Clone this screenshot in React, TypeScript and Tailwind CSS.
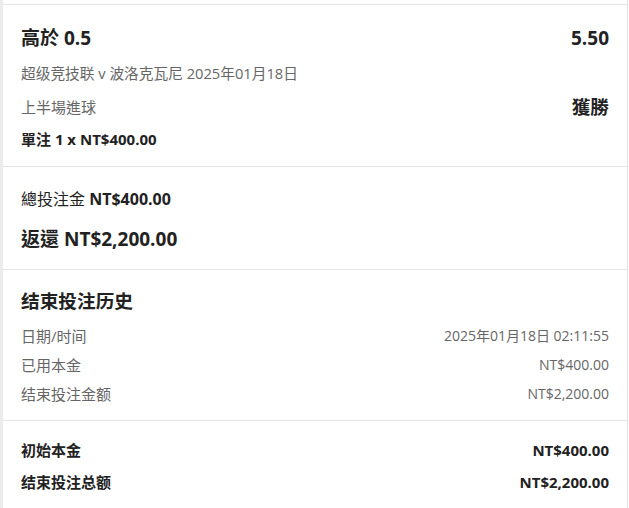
const font = {
  fontFamily: '"Open Sans", "Noto Sans CJK TC", "Noto Sans CJK SC", sans-serif',
};

const Row = ({ label, value }: { label: string; value: string }) => (
  <div className="flex h-5 items-center justify-between leading-5 text-[#666]">
    <span className="text-[15px]">{label}</span>
    <span className="text-[14px]">{value}</span>
  </div>
);

const App = () => {
  return (
    <div
      className="flex h-[508px] w-[629px] overflow-hidden bg-white text-[#222]"
      style={font}
    >
      <div className="w-[3px] shrink-0 bg-[#ececec]" />
      <div className="w-[625px] shrink-0 border-r border-[#e2e2e2] pt-1">
        {/* bet */}
        <div className="border-t border-[#e5e5e5] px-[18px] pt-[21px] pb-[17px]">
          <div className="flex h-6 items-center justify-between text-[19px] leading-6 font-bold">
            <span>高於 0.5</span>
            <span>5.50</span>
          </div>
          <div className="mt-[13px] h-5 text-[14.7px] leading-5 text-[#666]">
            超级竞技联 v 波洛克瓦尼 2025年01月18日
          </div>
          <div className="mt-3 flex h-6 items-center justify-between">
            <span className="text-[15px] text-[#666]">上半場進球</span>
            <span className="text-[18.67px] font-bold">獲勝</span>
          </div>
          <div className="mt-[10px] h-5 text-[15px] leading-5 font-bold">
            單注 1 x NT$400.00
          </div>
        </div>

        {/* totals */}
        <div className="border-t border-[#e5e5e5] px-[18px] pt-[22px] pb-[18px]">
          <div className="h-5 text-[16px] leading-5">
            總投注金 <span className="font-bold">NT$400.00</span>
          </div>
          <div className="mt-[18px] h-6 text-[19px] leading-6 font-bold">
            返還 NT$2,200.00
          </div>
        </div>

        {/* history */}
        <div className="border-t border-[#e5e5e5] px-[18px] pt-[19px] pb-[16px]">
          <div className="h-6 text-[18.67px] leading-6 font-bold">结束投注历史</div>
          <div className="mt-[13px] flex flex-col gap-[9px]">
            <Row label="日期/时间" value="2025年01月18日 02:11:55" />
            <Row label="已用本金" value="NT$400.00" />
            <Row label="结束投注金额" value="NT$2,200.00" />
          </div>
        </div>

        <div className="flex flex-col gap-3 border-t border-[#e5e5e5] px-[18px] pt-[19px]">
          <div className="flex h-5 items-center justify-between text-[15px] leading-5 font-bold">
            <span>初始本金</span>
            <span>NT$400.00</span>
          </div>
          <div className="flex h-5 items-center justify-between text-[15px] leading-5 font-bold">
            <span>结束投注总额</span>
            <span>NT$2,200.00</span>
          </div>
        </div>
      </div>
    </div>
  );
};

export default App;
